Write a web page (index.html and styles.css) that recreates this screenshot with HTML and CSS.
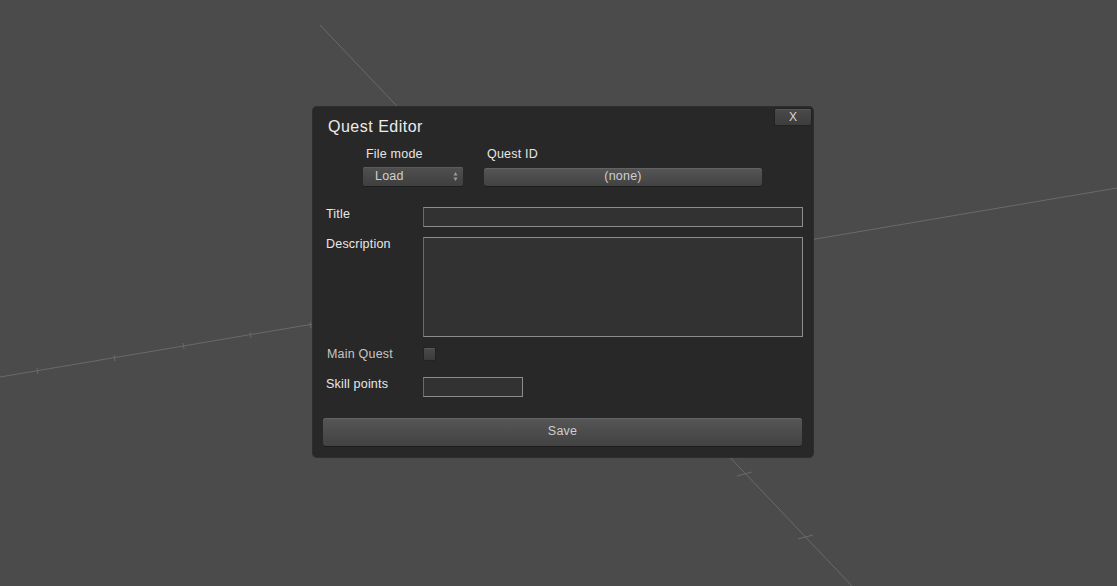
FILE: index.html
```html
<!DOCTYPE html>
<html>
<head>
<meta charset="utf-8">
<link rel="stylesheet" href="styles.css">
</head>
<body>
<svg class="scene" width="1117" height="586" viewBox="0 0 1117 586">
  <g stroke="#6a6a6a" stroke-width="1" fill="none">
    <line x1="320" y1="25" x2="852" y2="586"/>
    <line x1="737" y1="476" x2="752" y2="472"/>
    <line x1="798" y1="539" x2="813" y2="535"/>
    <line x1="0" y1="377" x2="1117" y2="188"/>
    <line x1="37" y1="368" x2="38" y2="374"/>
    <line x1="114" y1="355" x2="115" y2="361"/>
    <line x1="183" y1="343" x2="184" y2="349"/>
    <line x1="250" y1="332" x2="251" y2="338"/>
    <line x1="310" y1="322" x2="311" y2="328"/>
  </g>
</svg>
<main class="stage">
  <section class="window">
    <button class="close">X</button>
    <h1 class="title">Quest Editor</h1>
    <div class="file-row">
      <div class="col col-mode">
        <span class="col-label">File mode</span>
        <div class="dropdown">
          <span>Load</span>
          <svg class="arrows" width="5" height="11" viewBox="0 0 5 11">
            <path d="M2.5 1 L4.5 4.5 L0.5 4.5 Z M2.5 10 L4.5 6.5 L0.5 6.5 Z" fill="#9a9a9a"/>
          </svg>
        </div>
      </div>
      <div class="col col-id">
        <span class="col-label">Quest ID</span>
        <div class="btn idbtn">(none)</div>
      </div>
    </div>
    <div class="form">
      <label class="lbl">Title</label>
      <div class="field field-title"></div>
      <label class="lbl">Description</label>
      <div class="field field-desc"></div>
      <label class="lbl lbl-dim">Main Quest</label>
      <div class="check-cell"><span class="check"></span></div>
      <label class="lbl">Skill points</label>
      <div class="field field-skill"></div>
    </div>
    <div class="btn save">Save</div>
  </section>
</main>
</body>
</html>
```

FILE: styles.css
```css
html, body {
  margin: 0;
  padding: 0;
  width: 1117px;
  height: 586px;
  overflow: hidden;
  background: #4b4b4b;
  font-family: "Liberation Sans", Arial, sans-serif;
}

.scene {
  position: absolute;
  left: 0;
  top: 0;
}

.stage {
  position: relative;
  padding: 107px 0 0 313px;
}

.window {
  position: relative;
  width: 500px;
  height: 350px;
  box-sizing: border-box;
  background: #282828;
  border-radius: 4px;
  box-shadow: 0 0 0 1px #2d2d2d;
  display: flex;
  flex-direction: column;
}

.close {
  position: absolute;
  right: 1px;
  top: 1px;
  width: 38px;
  height: 18px;
  padding: 0 0 1px;
  border: 1px solid #222;
  border-radius: 2px;
  background: linear-gradient(#4a4a4a, #3d3d3d);
  box-shadow: inset 0 1px 0 #575757;
  color: #d8d8d8;
  font-family: "Liberation Sans", Arial, sans-serif;
  font-size: 12px;
  line-height: 14px;
}

.title {
  margin: 10px 0 0 15px;
  height: 20px;
  line-height: 20px;
  font-size: 16px;
  font-weight: normal;
  letter-spacing: 0.5px;
  color: #ececec;
}

.file-row {
  display: flex;
  gap: 21px;
  margin: 10px 0 0 50px;
}

.col {
  display: flex;
  flex-direction: column;
  gap: 6px;
}

.col-label {
  margin-left: 3px;
  height: 14px;
  line-height: 14px;
  font-size: 12.5px;
  letter-spacing: 0.2px;
  color: #e6e6e6;
}

.col-mode { width: 100px; }
.col-id { width: 278px; }

.dropdown {
  height: 19px;
  box-sizing: border-box;
  border-radius: 2px;
  background: linear-gradient(#505050, #3f3f3f);
  box-shadow: inset 0 1px 0 #5c5c5c, 0 1px 0 #1e1e1e;
  display: flex;
  align-items: center;
  justify-content: space-between;
  padding: 0 5px 2px 12px;
  color: #d0d0d0;
  font-size: 12.5px;
  letter-spacing: 0.2px;
}

.arrows { display: block; margin-top: 2px; }

.btn {
  box-sizing: border-box;
  border-radius: 3px;
  background: linear-gradient(#565656, #424242);
  box-shadow: inset 0 1px 0 #636363, 0 1px 0 #1c1c1c;
  color: #cecece;
  font-size: 12.5px;
  letter-spacing: 0.2px;
  display: flex;
  align-items: center;
  justify-content: center;
  padding-bottom: 2px;
}

.idbtn {
  height: 18px;
  margin-top: 1px;
}

.form {
  display: grid;
  grid-template-columns: 97px 380px;
  row-gap: 10px;
  margin: 21px 0 0 13px;
}

.lbl {
  align-self: start;
  height: 14px;
  line-height: 14px;
  font-size: 12.5px;
  letter-spacing: 0.2px;
  color: #e8e8e8;
}

.lbl-dim {
  margin-left: 1px;
  color: #c6c6c6;
}

.field {
  box-sizing: border-box;
  background: #323232;
  border: 1px solid #8c8c8c;
  border-left-color: #6a6a6a;
}

.field-title { height: 20px; }
.field-desc { height: 100px; }
.field-skill { width: 100px; height: 20px; }

.check-cell { height: 20px; }

.check {
  display: block;
  width: 13px;
  height: 14px;
  box-sizing: border-box;
  border-radius: 2px;
  border: 1px solid #232323;
  background: linear-gradient(#4a4a4a, #3c3c3c);
  box-shadow: inset 0 1px 0 #5a5a5a;
}

.save {
  margin: 21px 0 0 10px;
  width: 479px;
  height: 28px;
}
```
